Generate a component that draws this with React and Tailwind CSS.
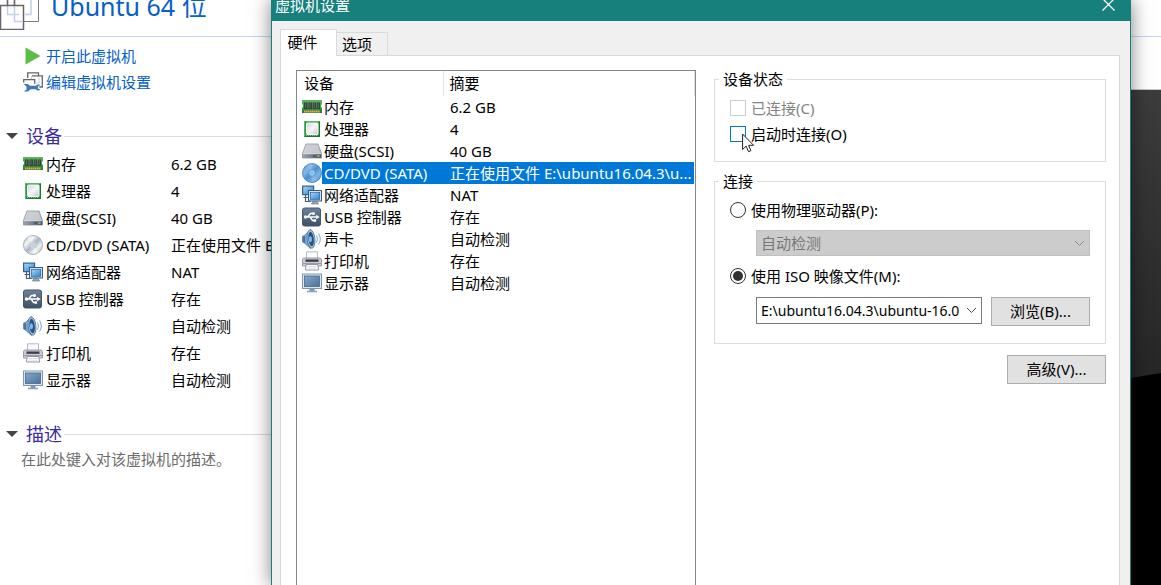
import { useState } from "react";

const devices = [
  { icon: "memory", name: "内存", value: "6.2 GB" },
  { icon: "cpu", name: "处理器", value: "4" },
  { icon: "disk", name: "硬盘(SCSI)", value: "40 GB" },
  {
    icon: "cd",
    name: "CD/DVD (SATA)",
    value: "正在使用文件 E:\\ubuntu16.04.3\\ubuntu-16.04.3-desktop-amd64.iso",
    short: "正在使用文件 E:\\ubuntu16.04.3\\u...",
  },
  { icon: "network", name: "网络适配器", value: "NAT" },
  { icon: "usb", name: "USB 控制器", value: "存在" },
  { icon: "sound", name: "声卡", value: "自动检测" },
  { icon: "printer", name: "打印机", value: "存在" },
  { icon: "display", name: "显示器", value: "自动检测" },
];

// gradients shared by every device icon
function IconDefs() {
  return (
    <svg className="absolute size-0" aria-hidden="true">
      <defs>
        <linearGradient id="g-green" x1="0" y1="0" x2="0" y2="1">
          <stop offset="0" stopColor="#5cb85f" />
          <stop offset="1" stopColor="#1f7d33" />
        </linearGradient>
        <linearGradient id="g-silver" x1="0" y1="0" x2="1" y2="1">
          <stop offset="0" stopColor="#cfd2d6" />
          <stop offset="0.5" stopColor="#f6f6f7" />
          <stop offset="1" stopColor="#c4c8cd" />
        </linearGradient>
        <linearGradient id="g-disk" x1="0" y1="0" x2="1" y2="1">
          <stop offset="0" stopColor="#e6e8eb" />
          <stop offset="1" stopColor="#a0a7b1" />
        </linearGradient>
        <linearGradient id="g-disk-front" x1="0" y1="0" x2="1" y2="0">
          <stop offset="0" stopColor="#9aa2ae" />
          <stop offset="1" stopColor="#4f5c6e" />
        </linearGradient>
        <linearGradient id="g-usb" x1="0" y1="0" x2="0" y2="1">
          <stop offset="0" stopColor="#6e8299" />
          <stop offset="1" stopColor="#3d5068" />
        </linearGradient>
        <linearGradient id="g-screen" x1="0" y1="0" x2="1" y2="1">
          <stop offset="0" stopColor="#86a9cc" />
          <stop offset="1" stopColor="#4c7299" />
        </linearGradient>
        <linearGradient id="g-blue" x1="0" y1="0" x2="1" y2="1">
          <stop offset="0" stopColor="#a9daf9" />
          <stop offset="1" stopColor="#2f82d0" />
        </linearGradient>
        <linearGradient id="g-cd" x1="0" y1="0" x2="1" y2="1">
          <stop offset="0" stopColor="#a9b1bd" />
          <stop offset="0.3" stopColor="#f2f4f6" />
          <stop offset="0.5" stopColor="#a9b4c3" />
          <stop offset="0.7" stopColor="#eef1f4" />
          <stop offset="1" stopColor="#98a2b0" />
        </linearGradient>
        <linearGradient id="g-cd-sel" x1="0" y1="0" x2="1" y2="1">
          <stop offset="0" stopColor="#4a90cc" />
          <stop offset="0.3" stopColor="#84b9e6" />
          <stop offset="0.5" stopColor="#4b8fcc" />
          <stop offset="0.7" stopColor="#7db5e5" />
          <stop offset="1" stopColor="#3d84c4" />
        </linearGradient>
      </defs>
    </svg>
  );
}

function DeviceIcon({ name, selected }) {
  return (
    <svg className="block size-5" viewBox="0 0 20 20" aria-hidden="true">
      {name === "memory" && (
        <>
          <path d="M0 3h20v4l-1 1v2l1 1v5H0v-5l1-1V8L0 7z" fill="url(#g-green)" />
          <path d="M2 5.500h3.500v6.500H2zM6.500 5.500H10v6.500H6.500zM10.800 5.500h3.400v6.500h-3.400zM15 5.500h3v6.500h-3z" fill="#3b403d" />
          <path d="M3.500 6v5M8 6v5M12.300 6v5M16.300 6v5" stroke="#727a75" strokeWidth="0.7" />
          <path d="M2 14.500h16" stroke="#eaa64d" strokeWidth="1.800" strokeDasharray="1.600 0.400" />
        </>
      )}
      {name === "cpu" && (
        <>
          <path d="M2 2h16v16H2z" fill="#2c9443" />
          <path d="M2.500 17.500v-15h15" stroke="#58b76b" fill="none" />
          <path d="M17.500 3v14.500H3" stroke="#1f7434" fill="none" />
          <path d="M4 16.500h12" stroke="#8fd09b" strokeWidth="0.800" strokeDasharray="1 1" />
          <rect x="4.500" y="4" width="11.500" height="11.500" rx="0.800" fill="url(#g-silver)" stroke="#fafcfa" />
        </>
      )}
      {name === "disk" && (
        <>
          <path d="M4 3h12l3.500 9.500v4.500H.5v-4.500z" fill="url(#g-disk)" stroke="#868e9a" strokeWidth="0.800" />
          <path d="M4.700 4h10.600l2.700 8H2z" fill="#c9cdd3" opacity="0.8" />
          <path d="M.8 13h18.400v4H.8z" fill="url(#g-disk-front)" />
          <path d="M1 12.700h18" stroke="#dfe2e6" strokeWidth="0.800" />
          <path d="M15.500 14.300h2v1.400h-2z" fill="#9bd657" />
          <path d="M11 15h3" stroke="#3b4656" />
        </>
      )}
      {name === "cd" && (
        <>
          <circle cx="10" cy="10" r="9.500" fill={selected ? "url(#g-cd-sel)" : "url(#g-cd)"} stroke={selected ? "#3b7fbd" : "#939dab"} strokeWidth="0.800" />
          <path d="M10 10 4 2.500A9 9 0 0 1 10 .8zM10 10l6 7.500a9 9 0 0 1-6 1.700z" fill="#fff" opacity={selected ? "0.1" : "0.400"} />
          <circle cx="10" cy="10" r="3.200" fill={selected ? "#8dc0ea" : "#dfe4ea"} stroke={selected ? "#5a9bd4" : "#b0b8c4"} strokeWidth="0.700" />
          <circle cx="10" cy="10" r="1.300" fill={selected ? "#4f9bdc" : "#fff"} stroke={selected ? "#d3e7f7" : "#8a95a4"} strokeWidth="0.600" />
        </>
      )}
      {name === "network" && (
        <>
          <rect x="0.600" y="1.100" width="11" height="8.500" fill="url(#g-blue)" stroke="#35628f" strokeWidth="1.200" />
          <path d="M3.500 10v6.500h5M1.500 12.500h5" stroke="#4a5e74" fill="none" strokeWidth="1.200" />
          <rect x="6.500" y="5.500" width="13" height="10.500" fill="#dce7f1" stroke="#3f5873" />
          <rect x="8.300" y="7.300" width="9.400" height="7" fill="url(#g-blue)" stroke="#1e5fa6" strokeWidth="0.700" />
          <path d="M11 16.300h4l1.500 2.700h-7z" fill="#9aa9b9" stroke="#596b7e" strokeWidth="0.600" />
        </>
      )}
      {name === "usb" && (
        <>
          <rect x="0.500" y="1" width="18" height="18" rx="2" fill="url(#g-usb)" stroke="#43566e" />
          <path d="M3 10h12M5.500 10l3-3.500h2.500M8 10l2.500 3.500h2" stroke="#fff" strokeWidth="1.400" fill="none" />
          <circle cx="3.500" cy="10" r="1.700" fill="#fff" />
          <circle cx="11.500" cy="6.500" r="1.500" fill="#fff" />
          <path d="M11.500 12.200h2.600v2.600h-2.600zM14.200 7.800l3.400 2.200-3.400 2.200z" fill="#fff" />
        </>
      )}
      {name === "sound" && (
        <>
          <path d="M.5 7.200 3 6l5.500-5.500 2 9-2 10L3 14.500.5 13z" fill="url(#g-blue)" stroke="#5d7f9f" strokeWidth="0.800" />
          <path d="M.9 7.600 3.200 6.500v7.500l-2.300-1.300z" fill="#4f7296" />
          <ellipse cx="9" cy="10" rx="3.900" ry="9.300" fill="#a7c4df" stroke="#4a6e93" strokeWidth="0.800" transform="rotate(-6 9 10)" />
          <ellipse cx="9.100" cy="10" rx="2.700" ry="7.300" fill="#255382" transform="rotate(-6 9.100 10)" />
          <ellipse cx="8.400" cy="10.200" rx="1.500" ry="3" fill="#7db9ec" />
          <path d="M14.300 6.500c1.300 2 1.300 5 0 7M16.500 4.500c2.300 3.500 2.300 7.500 0 11" stroke="#8baed5" fill="none" strokeWidth="1.100" />
        </>
      )}
      {name === "printer" && (
        <>
          <path d="M4.500.8h11V8h-11z" fill="#fafbfc" stroke="#a5a8b3" strokeWidth="0.800" />
          <path d="M1.500 7h17l1 1.500v6.500H.5V8.500z" fill="#c9cad4" stroke="#8b8b9b" strokeWidth="0.800" />
          <path d="M3.500 8.500h13v2.300h-13z" fill="#3b3c45" />
          <path d="M1 12.500h18" stroke="#9b9cab" />
          <path d="M4.300 13.500h11.400l1 5.500H3.300z" fill="#fff" stroke="#8d8a9f" strokeWidth="0.900" />
          <path d="M5.500 15.500h9M5.200 17.200h9.600" stroke="#d3d2dc" strokeWidth="0.700" />
        </>
      )}
      {name === "display" && (
        <>
          <rect x="0.500" y="1" width="19" height="14.500" fill="#dbe5ee" stroke="#8097ae" />
          <rect x="2.500" y="3" width="15" height="10.500" fill="url(#g-screen)" stroke="#456889" strokeWidth="0.800" />
          <path d="M7.500 16h5v2h-5z" fill="#7f95ab" />
          <path d="M5 18.500h10" stroke="#8ea3b8" strokeWidth="1.600" />
        </>
      )}
    </svg>
  );
}

function Chevron({ className }) {
  return (
    <svg className={className} viewBox="0 0 11 7" fill="none" stroke="currentColor" aria-hidden="true">
      <path d="M1 1l4.500 4.500L10 1" />
    </svg>
  );
}

function SectionTitle({ children }) {
  return (
    <h2 className="flex h-7 items-center text-lg leading-7 text-[#3a2b9e]">
      <svg className="mr-2 h-1.5 w-3" viewBox="0 0 12 6" aria-hidden="true">
        <path d="M0 0h12L6 6z" fill="#444" />
      </svg>
      {children}
      <span className="ml-0.5 h-px flex-1 bg-[#dcdcdc]" />
    </h2>
  );
}

function Sidebar() {
  return (
    <aside className="w-[271px] shrink-0 overflow-hidden whitespace-nowrap bg-white text-[15px]">
      <header className="flex h-[37px] items-end overflow-hidden border-b border-[#bfd8f5]">
        <svg className="mb-1.5 h-[30px] w-[39px] shrink-0" viewBox="0 0 39 30" fill="none" aria-hidden="true">
          <path d="M14.500-8h24v29.500h-24z" fill="#fff" stroke="#7b7b7b" />
          <path d="M.5 5.500h23v24H.5z" fill="#fff" />
          <path d="M7.500-2v16.500h6M14.500-2v23.500h7.500M14.500 14.500H19M25 14.500h6V-2" stroke="#c3cfe9" strokeWidth="1.500" />
          <path d="M7.500-2v7M14.500-2v7" stroke="#666" strokeWidth="1.500" />
          <path d="M.5 5.500h23v24H.5z" stroke="#666" strokeWidth="1.500" />
        </svg>
        <h1 className="mb-3 ml-3 text-[25px] leading-9 text-[#0560c8]">Ubuntu 64 位</h1>
      </header>

      <nav className="flex flex-col pl-[23px] pt-1.5 text-[#0560c8]">
        <a href="#power" className="flex h-[26px] items-center gap-[3px]">
          <svg className="size-5" viewBox="0 0 20 20" aria-hidden="true">
            <path d="M2.500 1.500v17L17.500 10z" fill="#5bbd45" />
          </svg>
          开启此虚拟机
        </a>
        <a href="#settings" className="flex h-[26px] items-center gap-[3px]">
          <svg className="size-5" viewBox="0 0 20 20" fill="none" aria-hidden="true">
            <path d="M4.700 6V.8h10.800V3.500M9 3.800h10.300V15h-3" stroke="#666" strokeWidth="1.300" />
            <path d="M16 5.500V11h-3M8.500 4v3" stroke="#c3cfe9" />
            <path d="M.7 10.500V7.700h11v4" stroke="#666" strokeWidth="1.300" />
            <path d="M.5 12h4.200L7 13.800h6c1-1.300 2.800-1.600 4.300-.9L15 14.500v2l2.400 1.300c-1.600 1.100-3.600.7-4.600-.6H7.500L5 19.600H.8L3.500 17.500v-3z" fill="#3f78b5" />
          </svg>
          编辑虚拟机设置
        </a>
      </nav>

      <section className="mt-[27px] pl-1.5">
        <SectionTitle>设备</SectionTitle>
        <table className="ml-[17px] w-[248px] table-fixed text-black">
          <tbody>
            {devices.map((d) => (
              <tr key={d.icon} className="h-[27px]">
                <td className="w-[23px] p-0">
                  <DeviceIcon name={d.icon} />
                </td>
                <th scope="row" className="w-[125px] p-0 text-left font-normal leading-6">
                  {d.name}
                </th>
                <td className="overflow-hidden p-0 leading-6">{d.value}</td>
              </tr>
            ))}
          </tbody>
        </table>
      </section>

      <section className="mt-[27px] pl-1.5">
        <SectionTitle>描述</SectionTitle>
        <p className="pl-[15px] leading-[22px] text-[#6d6d6d]">在此处键入对该虚拟机的描述。</p>
      </section>
    </aside>
  );
}

function DeviceList({ selected, onSelect }) {
  return (
    <div className="mt-3.5 w-[400px] shrink-0 border border-b-0 border-[#828790] bg-white">
      <table className="w-full table-fixed whitespace-nowrap">
        <colgroup>
          <col className="w-[25px]" />
          <col className="w-[121px]" />
          <col />
        </colgroup>
        <thead>
          <tr className="h-[25px] text-left">
            <th colSpan={2} className="py-0 pl-[7px] font-normal">设备</th>
            <th className="border-x border-[#e2e2e2] py-0 pl-1.5 font-normal">摘要</th>
          </tr>
        </thead>
        <tbody>
          {devices.map((d) => (
            <tr key={d.icon} onClick={() => onSelect(d.icon)} className="h-[22px] leading-[22px]">
              <td className="py-0 pl-[5px]">
                <DeviceIcon name={d.icon} selected={selected === d.icon} />
              </td>
              <td className={selected === d.icon ? "bg-[#0078d7] py-0 pl-0.5 text-white" : "py-0 pl-0.5"}>
                {d.name}
              </td>
              <td className={selected === d.icon ? "border-r border-white bg-[#0078d7] py-0 pl-[7px] text-white" : "border-r border-white py-0 pl-[7px]"}>
                {d.short || d.value}
              </td>
            </tr>
          ))}
        </tbody>
      </table>
    </div>
  );
}

function Radio({ id, label, checked, onChange }) {
  return (
    <div className="flex h-5 items-center gap-[5px]">
      <input
        id={id}
        type="radio"
        name="source"
        checked={checked}
        onChange={onChange}
        className="grid size-4 appearance-none place-content-center rounded-full border border-[#333] bg-white checked:before:size-2.5 checked:before:rounded-full checked:before:bg-[#333]"
      />
      <label htmlFor={id}>{label}</label>
    </div>
  );
}

function SettingsDialog() {
  const [tab, setTab] = useState("hardware");
  const [selected, setSelected] = useState("cd");
  const [autoConnect, setAutoConnect] = useState(false);
  const [source, setSource] = useState("iso");

  return (
    <main
      role="dialog"
      aria-labelledby="dialog-title"
      className="z-10 flex min-w-0 flex-1 flex-col border-x border-[#16807d] bg-[#f0f0f0] text-[15px] text-black shadow-[0_0_18px_rgba(0,0,0,0.5)]"
    >
      <div className="flex h-[21px] shrink-0 items-end justify-between overflow-hidden bg-[#16807d] pl-[3px] pr-[15px] text-white">
        <h2 id="dialog-title" className="mb-1.5 leading-5">虚拟机设置</h2>
        <button type="button" aria-label="关闭" className="mb-2.5">
          <svg className="block size-[13px]" viewBox="0 0 13 13" stroke="currentColor" strokeWidth="1.300" aria-hidden="true">
            <path d="M.5.5l12 12M12.500.5l-12 12" />
          </svg>
        </button>
      </div>

      <div role="tablist" className="z-10 ml-2 mt-2 flex shrink-0 items-end">
        <button
          type="button"
          role="tab"
          aria-selected={tab === "hardware"}
          onClick={() => setTab("hardware")}
          className="-mb-px h-[27px] w-[57px] border border-b-0 border-[#d9d9d9] bg-white pb-0.5 pr-3 leading-6"
        >
          硬件
        </button>
        <button
          type="button"
          role="tab"
          aria-selected={tab === "options"}
          onClick={() => setTab("options")}
          className="h-[23px] w-[51px] border border-b-0 border-l-0 border-[#d9d9d9] pr-2.5 leading-5"
        >
          选项
        </button>
      </div>

      <div role="tabpanel" className="ml-2 mr-2.5 flex min-h-0 flex-1 gap-[18px] border border-b-0 border-[#d9d9d9] bg-white pl-[15px] pr-[13px]">
        <DeviceList selected={selected} onSelect={setSelected} />

        <div className="min-w-0 flex-1 pt-[13px]">
          <fieldset className="min-w-0 border border-[#dcdcdc] px-[15px] pb-3.5">
            <legend className="-ml-[11px] px-1 leading-5">设备状态</legend>
            <div className="flex h-8 items-center gap-[5px] pt-1.5">
              <input id="connected" type="checkbox" disabled className="size-4 appearance-none border border-[#ccc] bg-white" />
              <label htmlFor="connected" className="text-[#838383]">已连接(C)</label>
            </div>
            <div className="relative flex h-[26px] items-center gap-[5px]">
              <input
                id="autoconnect"
                type="checkbox"
                checked={autoConnect}
                onChange={(e) => setAutoConnect(e.target.checked)}
                className="size-4 appearance-none border border-[#0078d7] bg-white checked:bg-[#0078d7]"
              />
              <label htmlFor="autoconnect">启动时连接(O)</label>
              {/* mouse pointer */}
              <svg className="pointer-events-none absolute left-3 top-3 h-5 w-[13px]" viewBox="0 0 13 20" aria-hidden="true">
                <path d="M.6 1v15.500l3.600-3.400 2.300 5.600 2.400-1-2.300-5.400h5z" fill="#fff" stroke="#222" />
              </svg>
            </div>
          </fieldset>

          <fieldset className="mt-[9px] min-w-0 border border-[#dcdcdc] px-[15px] pb-[17px]">
            <legend className="-ml-[11px] px-1 leading-5">连接</legend>
            <div className="pt-[9px]">
              <Radio id="physical" label="使用物理驱动器(P):" checked={source === "physical"} onChange={() => setSource("physical")} />
            </div>
            <div className="relative ml-[26px] mt-2.5">
              <select
                aria-label="物理驱动器"
                disabled
                className="block h-[26px] w-full appearance-none border border-[#bfbfbf] bg-[#ccc] pl-1 text-[#787878] opacity-100"
              >
                <option>自动检测</option>
              </select>
              <Chevron className="pointer-events-none absolute right-[5px] top-2.5 h-[7px] w-[11px] text-[#8f8f8f]" />
            </div>
            <div className="mt-2.5">
              <Radio id="iso" label="使用 ISO 映像文件(M):" checked={source === "iso"} onChange={() => setSource("iso")} />
            </div>
            <div className="ml-[26px] mt-[11px] flex gap-[9px]">
              <div className="relative min-w-0 flex-1">
                <select
                  aria-label="ISO 映像文件"
                  className="block h-[27px] w-full appearance-none overflow-hidden border border-[#7a7a7a] bg-white pl-1 pr-[22px] text-sm"
                >
                  <option>E:\ubuntu16.04.3\ubuntu-16.04.3-desktop-amd64.iso</option>
                </select>
                <Chevron className="pointer-events-none absolute right-[5px] top-2.5 h-[7px] w-[11px] text-[#444]" />
              </div>
              <button type="button" className="h-[29px] w-[99px] shrink-0 border border-[#adadad] bg-[#e1e1e1]">
                浏览(B)...
              </button>
            </div>
          </fieldset>

          <div className="mt-[11px] flex justify-end">
            <button type="button" className="h-[29px] w-[99px] border border-[#adadad] bg-[#e1e1e1]">
              高级(V)...
            </button>
          </div>
        </div>
      </div>
    </main>
  );
}

export default function App() {
  return (
    <div className="flex h-screen overflow-hidden bg-white font-['Noto_Sans','Noto_Sans_CJK_SC',sans-serif]">
      <IconDefs />
      <Sidebar />
      <SettingsDialog />
      {/* guest preview behind the dialog */}
      <div className="flex w-[30px] shrink-0 flex-col bg-white">
        <div className="h-[37px] border-b border-[#bfd8f5]" />
        <div className="h-[53px] border-b border-[#c8c8c8]" />
        <div className="flex flex-1 flex-col bg-linear-to-b from-[#3c3c3c] to-[#181818] pt-[283px]">
          <div className="flex-1 bg-black [clip-path:polygon(0_5px,100%_0,100%_100%,0_100%)]" />
        </div>
      </div>
    </div>
  );
}
